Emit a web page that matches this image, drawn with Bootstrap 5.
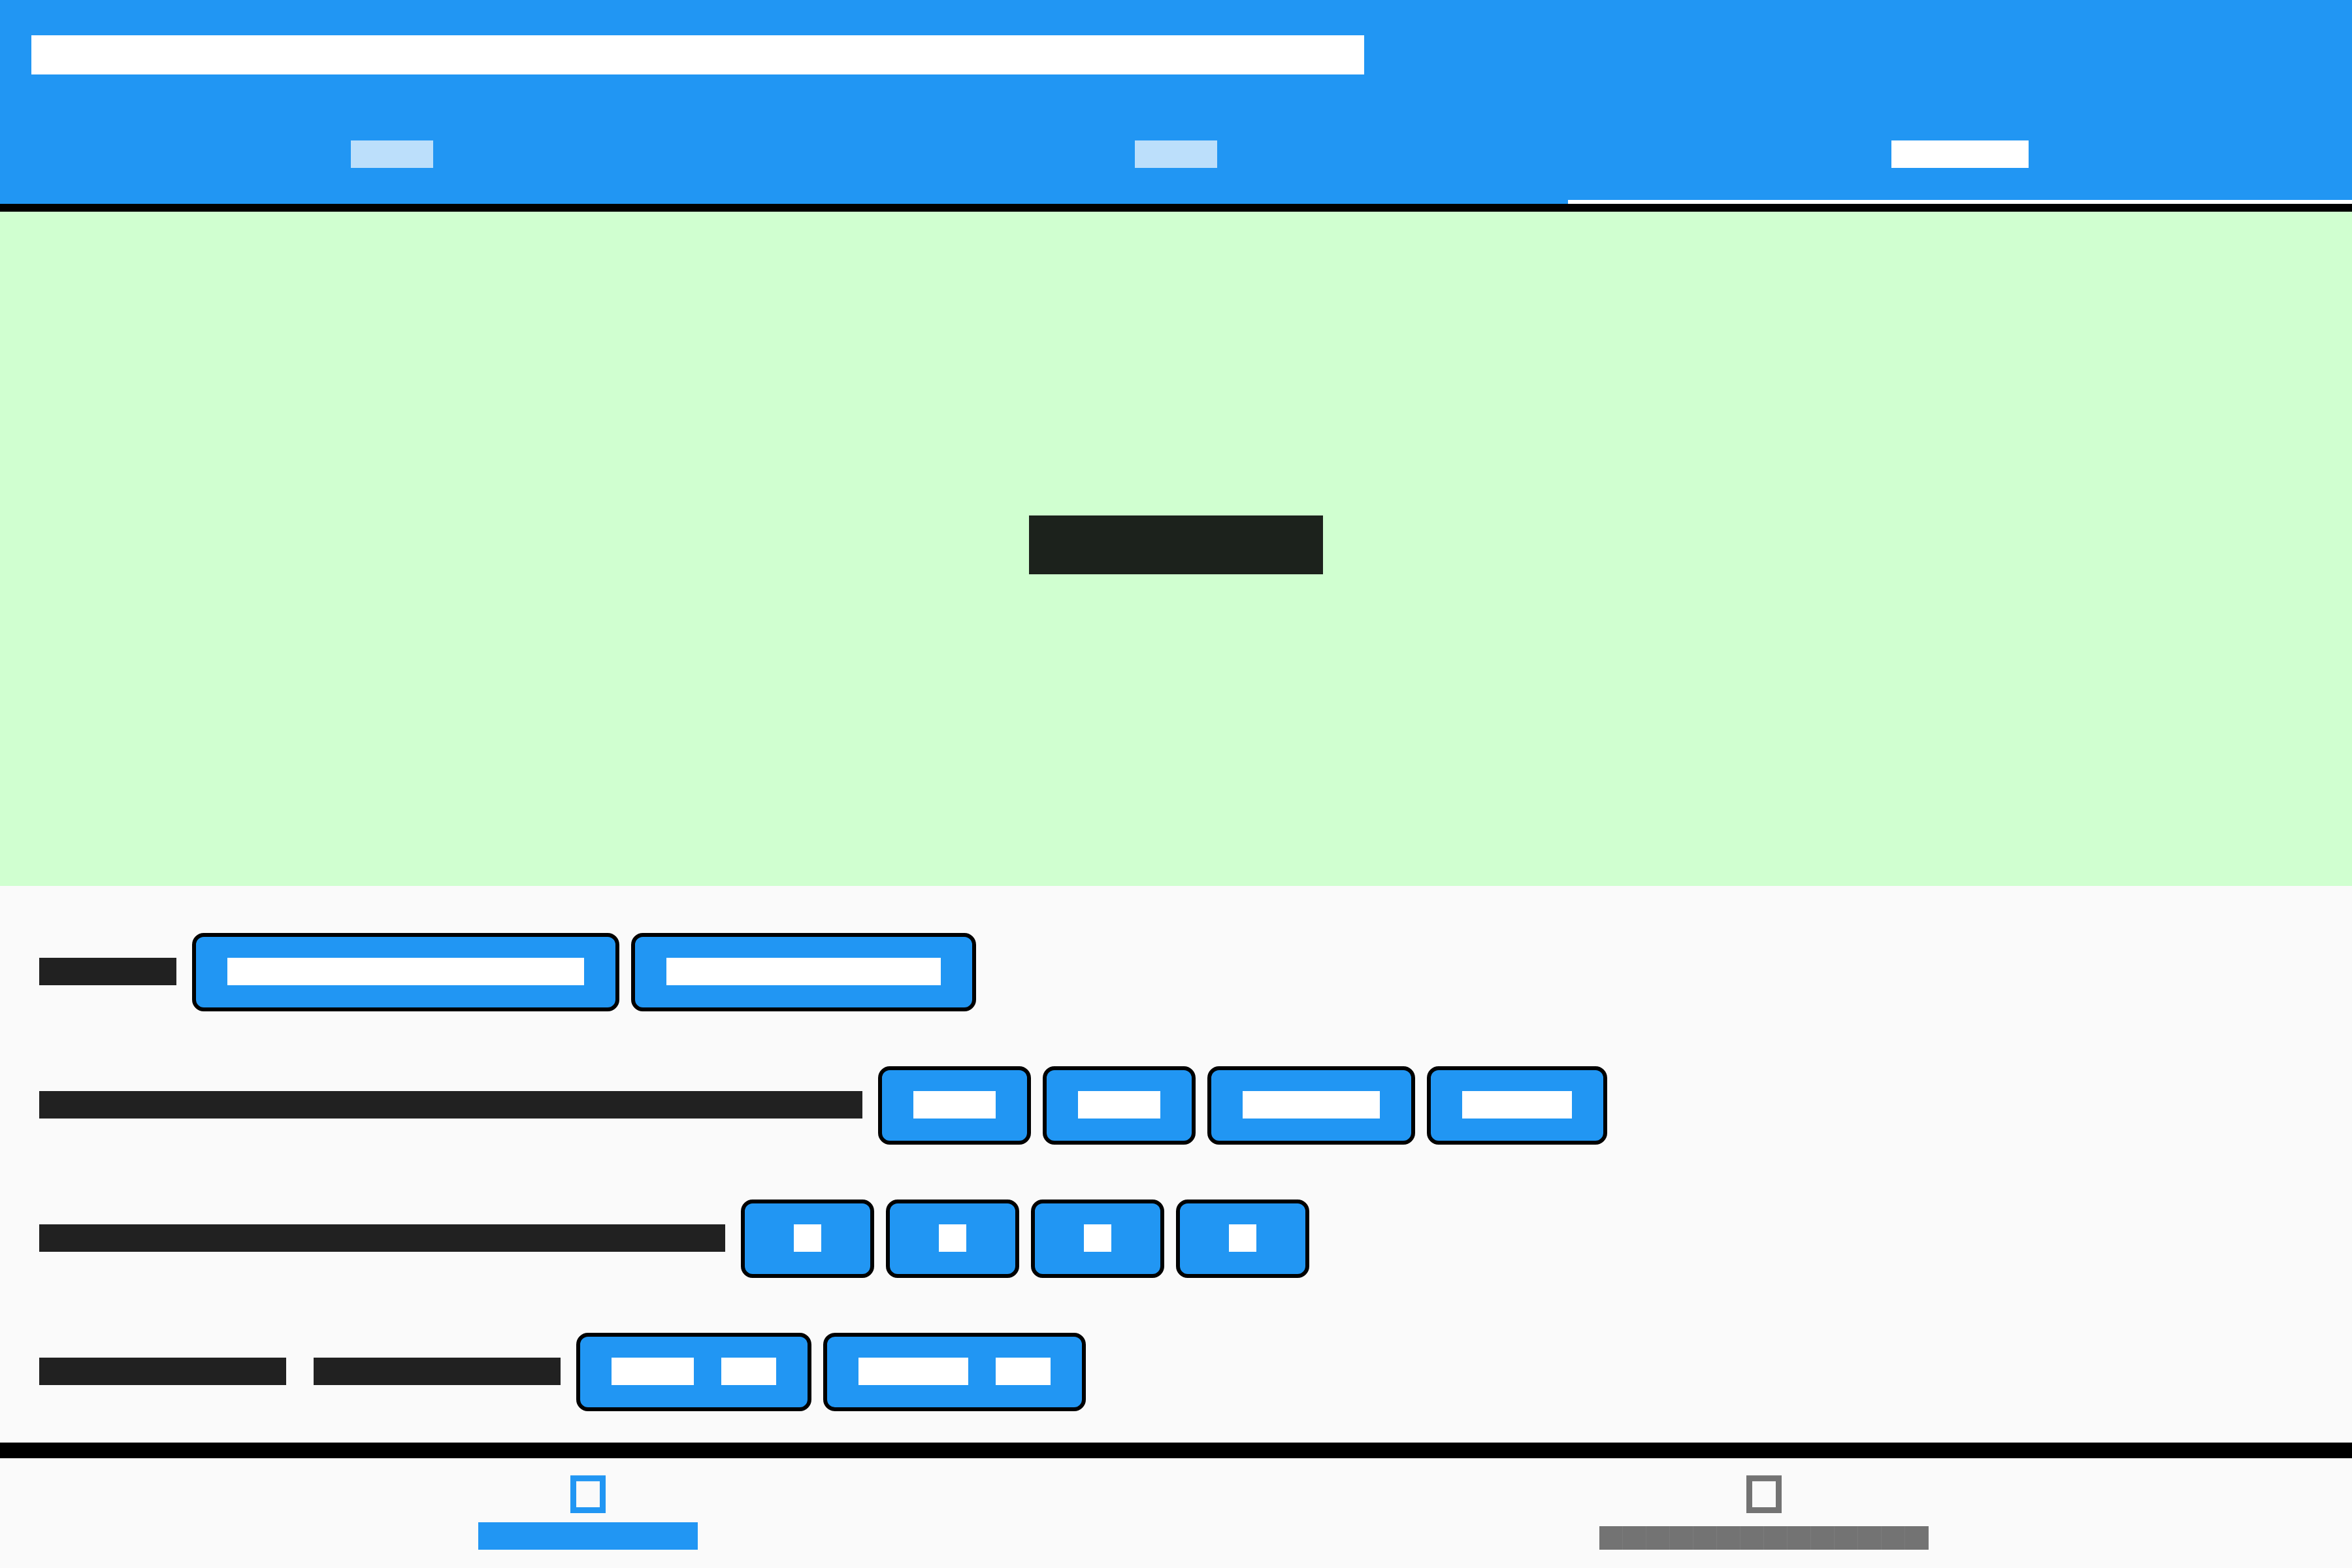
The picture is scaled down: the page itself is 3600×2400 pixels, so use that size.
<!DOCTYPE html>
<html lang="en">
<head>
<meta charset="utf-8">
<meta name="viewport" content="width=device-width, initial-scale=1">
<title>Settings</title>
<link rel="stylesheet" href="https://cdn.jsdelivr.net/npm/bootstrap@5.3.0/dist/css/bootstrap.min.css">
<style>
  html, body { height: 100%; }
  body { background: #fafafa; font-family: Roboto, sans-serif; font-size: 42px; line-height: 1; }

  /* A word block: one square em per character */
  .word { display: block; flex: none; width: calc(var(--chars) * 1em); height: 1em; background: currentColor; }
  .word-lg { font-size: 60px; }
  .word-xl { font-size: 90px; }
  .word-sm {
    font-size: 36px;
    background: repeating-linear-gradient(to right, #737373 0 35px, #7b7b7b 35px 36px);
  }

  .app-header { background: var(--app-blue); border-bottom: 12px solid #000; }
  :root { --app-blue: #2196f3; --app-ink: rgba(0, 0, 0, .867); --app-muted: #737373; }
  .app-title { padding: 54px 48px; color: #fff; }
  .app-tab {
    padding: 47px 0 49px; border: 0; border-bottom: 6px solid transparent;
    border-radius: 0; color: #bcdffb;
  }
  .app-tab:hover, .app-tab:focus { color: #bcdffb; }
  .app-tab.active, .app-tab.active:hover { color: #fff; border-bottom-color: #fff; }

  .app-stage { background: #d0ffd0; color: var(--app-ink); padding-bottom: 12px; }

  .app-options { padding: 72px 60px 48px; gap: 84px; }
  .option-row { gap: 24px; color: #212121; }
  .option-words { gap: 42px; }
  .option-buttons { gap: 18px; }
  .btn-option {
    --bs-btn-color: #fff; --bs-btn-bg: var(--app-blue); --bs-btn-border-color: #000;
    --bs-btn-hover-color: #fff; --bs-btn-hover-bg: #1e88e5; --bs-btn-hover-border-color: #000;
    --bs-btn-font-size: 42px; --bs-btn-line-height: 1;
    min-width: 204px; padding: 32px 48px 34px; gap: 42px;
    border-width: 6px; border-radius: 18px;
  }
  .option-row > .word, .option-words { margin-bottom: 2px; }

  .app-footer { border-top: 24px solid #000; }
  .footer-link { padding: 26px 0 28px; gap: 14px; color: var(--app-muted); }
  .footer-link.active { color: var(--app-blue); }
</style>
</head>
<body>
<div class="d-flex flex-column h-100">

  <header class="app-header">
    <h1 class="app-title m-0" aria-label="Settings"><span class="word word-lg" style="--chars:34"></span></h1>
    <nav class="nav row g-0" aria-label="Sections">
      <a class="nav-link app-tab col d-flex justify-content-center" href="#one" aria-label="First"><span class="word" style="--chars:3"></span></a>
      <a class="nav-link app-tab col d-flex justify-content-center" href="#two" aria-label="Second"><span class="word" style="--chars:3"></span></a>
      <a class="nav-link app-tab col d-flex justify-content-center active" href="#three" aria-label="Third" aria-current="page"><span class="word" style="--chars:5"></span></a>
    </nav>
  </header>

  <main class="flex-grow-1 d-flex flex-column">
    <section class="app-stage flex-grow-1 d-flex align-items-center justify-content-center">
      <span class="word word-xl" style="--chars:5"></span>
    </section>

    <section class="app-options d-flex flex-column">
      <div class="option-row d-flex align-items-center">
        <span class="word" style="--chars:5"></span>
        <div class="option-buttons d-flex">
          <button type="button" class="btn btn-option d-flex justify-content-center" aria-label="Option 1"><span class="word" style="--chars:13"></span></button>
          <button type="button" class="btn btn-option d-flex justify-content-center" aria-label="Option 2"><span class="word" style="--chars:10"></span></button>
        </div>
      </div>

      <div class="option-row d-flex align-items-center">
        <span class="word" style="--chars:30"></span>
        <div class="option-buttons d-flex">
          <button type="button" class="btn btn-option d-flex justify-content-center" aria-label="Option 1"><span class="word" style="--chars:3"></span></button>
          <button type="button" class="btn btn-option d-flex justify-content-center" aria-label="Option 2"><span class="word" style="--chars:3"></span></button>
          <button type="button" class="btn btn-option d-flex justify-content-center" aria-label="Option 3"><span class="word" style="--chars:5"></span></button>
          <button type="button" class="btn btn-option d-flex justify-content-center" aria-label="Option 4"><span class="word" style="--chars:4"></span></button>
        </div>
      </div>

      <div class="option-row d-flex align-items-center">
        <span class="word" style="--chars:25"></span>
        <div class="option-buttons d-flex">
          <button type="button" class="btn btn-option d-flex justify-content-center" aria-label="Option 1"><span class="word" style="--chars:1"></span></button>
          <button type="button" class="btn btn-option d-flex justify-content-center" aria-label="Option 2"><span class="word" style="--chars:1"></span></button>
          <button type="button" class="btn btn-option d-flex justify-content-center" aria-label="Option 3"><span class="word" style="--chars:1"></span></button>
          <button type="button" class="btn btn-option d-flex justify-content-center" aria-label="Option 4"><span class="word" style="--chars:1"></span></button>
        </div>
      </div>

      <div class="option-row d-flex align-items-center">
        <div class="option-words d-flex">
          <span class="word" style="--chars:9"></span>
          <span class="word" style="--chars:9"></span>
        </div>
        <div class="option-buttons d-flex">
          <button type="button" class="btn btn-option d-flex justify-content-center" aria-label="Option 1"><span class="word" style="--chars:3"></span><span class="word" style="--chars:2"></span></button>
          <button type="button" class="btn btn-option d-flex justify-content-center" aria-label="Option 2"><span class="word" style="--chars:4"></span><span class="word" style="--chars:2"></span></button>
        </div>
      </div>
    </section>
  </main>

  <footer class="app-footer">
    <nav class="row g-0" aria-label="Views">
      <a class="footer-link active col d-flex flex-column align-items-center justify-content-between text-decoration-none" href="#first-view" aria-label="First view" aria-current="page">
        <svg width="54" height="58" viewBox="0 0 54 58" fill="currentColor" fill-rule="evenodd" aria-hidden="true"><path d="M0 .2H54V58H0ZM9 9.2V49H45V9.2Z"/></svg>
        <span class="word" style="--chars:8"></span>
      </a>
      <a class="footer-link col d-flex flex-column align-items-center justify-content-between text-decoration-none" href="#second-view" aria-label="Second view">
        <svg width="54" height="58" viewBox="0 0 54 58" fill="currentColor" fill-rule="evenodd" aria-hidden="true"><path d="M0 .2H54V58H0ZM9 9.2V49H45V9.2Z"/></svg>
        <span class="word word-sm" style="--chars:14"></span>
      </a>
    </nav>
  </footer>

</div>
<script src="https://cdn.jsdelivr.net/npm/bootstrap@5.3.0/dist/js/bootstrap.bundle.min.js"></script>
</body>
</html>
